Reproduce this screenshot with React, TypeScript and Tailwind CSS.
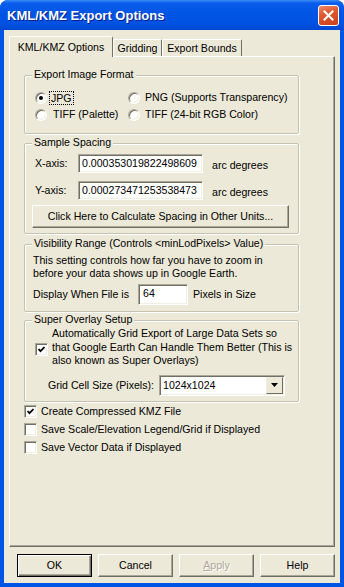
import React from 'react';

const sunken =
  'border border-t-[#ACA899] border-l-[#ACA899] border-r-white border-b-white shadow-[inset_1px_1px_0_#716F64,inset_-1px_-1px_0_#F1EFE2]';

function Radio({ checked }: { checked?: boolean }) {
  return (
    <span className={`relative flex-shrink-0 w-[12px] h-[12px] rounded-full bg-white flex items-center justify-center ${sunken}`}>
      {checked && <span className="w-[4px] h-[4px] rounded-full bg-black" />}
    </span>
  );
}

function Check({ checked }: { checked?: boolean }) {
  return (
    <span className={`flex-shrink-0 w-[13px] h-[13px] bg-white flex items-center justify-center ${sunken}`}>
      {checked && (
        <svg width="9" height="9" viewBox="0 0 9 9">
          <polyline points="1.5,4 3.5,6.2 7.5,2" fill="none" stroke="#000" strokeWidth="1.8" />
        </svg>
      )}
    </span>
  );
}

function Group({ title, className, children }: { title: string; className: string; children: React.ReactNode }) {
  return (
    <div className={`relative w-[275px] rounded-[2px] border border-[#C5C2B2] shadow-[inset_1px_1px_0_#fff,1px_1px_0_#fff] ${className}`}>
      {/* legend sits on the frame */}
      <span className="absolute -top-[8px] left-[7px] px-[2px] bg-[#ECE9D8] leading-[13px] whitespace-nowrap">{title}</span>
      {children}
    </div>
  );
}

function Button({ children, isDefault }: { children: React.ReactNode; isDefault?: boolean }) {
  return (
    <div
      className={`w-[75px] h-[23px] flex items-center justify-center bg-[#ECE9D8] border ${
        isDefault
          ? 'border-black shadow-[inset_1px_1px_0_#fff,inset_-1px_-1px_0_#716F64,inset_-2px_-2px_0_#ACA899]'
          : 'border-t-white border-l-white border-r-[#716F64] border-b-[#716F64] shadow-[inset_-1px_-1px_0_#ACA899]'
      }`}
    >
      {children}
    </div>
  );
}

export default function App() {
  return (
    <div className="w-[344px] h-[587px] flex flex-col bg-[#0055E5] rounded-t-[8px] overflow-hidden font-['Liberation_Sans',Arial,sans-serif] text-[10.6px] leading-[13px] text-black whitespace-nowrap">
      {/* Title bar */}
      <div className="h-[30px] flex items-center pl-[7px] pr-[5px] bg-[linear-gradient(180deg,#3C8EF8_0%,#0A5DEB_10%,#0055E5_45%,#0052E1_80%,#0046D2_100%)]">
        <span className="text-[13px] font-bold text-white [text-shadow:1px_1px_0_#0A1E8A]">KML/KMZ Export Options</span>
        <div className="ml-auto w-[21px] h-[21px] rounded-[3px] border border-white bg-[linear-gradient(160deg,#EC8A6C_0%,#E0592F_40%,#C83F1B_100%)] flex items-center justify-center">
          <svg width="11" height="11" viewBox="0 0 11 11">
            <path d="M1.5 1.5 L9.5 9.5 M9.5 1.5 L1.5 9.5" stroke="#fff" strokeWidth="2" strokeLinecap="square" />
          </svg>
        </div>
      </div>

      {/* Client area */}
      <div className="flex-1 mx-[4px] mb-[4px] bg-[#ECE9D8] flex flex-col pt-[6px] px-[5px]">
        {/* Tabs */}
        <div className="flex items-end h-[20px]">
          <div className="relative z-10 w-[104px] h-[21px] -mb-[1px] flex items-start justify-center pt-[4px] bg-[#ECE9D8] border-t border-l border-white border-r border-r-[#716F64] rounded-t-[2px]">
            KML/KMZ Options
          </div>
          <div className="w-[49px] h-[17px] flex items-center justify-center bg-[#ECE9D8] border-t border-l border-white border-r border-r-[#716F64] rounded-t-[2px]">
            Gridding
          </div>
          <div className="w-[80px] h-[17px] flex items-center justify-center bg-[#ECE9D8] border-t border-l border-white border-r border-r-[#716F64] rounded-t-[2px]">
            Export Bounds
          </div>
        </div>

        {/* Tab panel */}
        <div className="h-[491px] border border-t-white border-l-white border-r-[#716F64] border-b-[#716F64] shadow-[inset_-1px_-1px_0_#ACA899] pl-[14px] flex flex-col">
          <Group title="Export Image Format" className="mt-[18px] h-[59px] pt-[13px] pl-[10px]">
            <div className="grid grid-cols-[93px_1fr]">
              <div className="h-[17px] flex items-center gap-[3px]">
                <Radio checked />
                <span className="outline-1 outline-dotted outline-black px-[1px] leading-[12px]">JPG</span>
              </div>
              <div className="h-[17px] flex items-center gap-[5px]">
                <Radio />
                <span>PNG (Supports Transparency)</span>
              </div>
              <div className="h-[17px] flex items-center gap-[6px]">
                <Radio />
                <span>TIFF (Palette)</span>
              </div>
              <div className="h-[17px] flex items-center gap-[5px]">
                <Radio />
                <span>TIFF (24-bit RGB Color)</span>
              </div>
            </div>
          </Group>

          <Group title="Sample Spacing" className="mt-[9px] h-[91px] pt-[10px] pl-[7px]">
            <div className="flex items-center h-[19px] pl-[3px]">
              <span className="w-[43px]">X-axis:</span>
              <div className={`w-[125px] h-[19px] bg-white flex items-center pl-[3px] ${sunken}`}>0.000353019822498609</div>
              <span className="ml-[9px] pt-[4px]">arc degrees</span>
            </div>
            <div className="flex items-center h-[19px] pl-[3px] mt-[8px]">
              <span className="w-[43px]">Y-axis:</span>
              <div className={`w-[125px] h-[19px] bg-white flex items-center pl-[3px] ${sunken}`}>0.000273471253538473</div>
              <span className="ml-[9px] pt-[4px]">arc degrees</span>
            </div>
            <div className="mt-[5px] w-[257px] h-[23px] flex items-center justify-center border border-t-white border-l-white border-r-[#716F64] border-b-[#716F64] shadow-[inset_-1px_-1px_0_#ACA899]">
              Click Here to Calculate Spacing in Other Units...
            </div>
          </Group>

          <Group title="Visibility Range (Controls <minLodPixels> Value)" className="mt-[10px] h-[68px] pt-[9px] pl-[8px]">
            <p>This setting controls how far you have to zoom in</p>
            <p>before your data shows up in Google Earth.</p>
            <div className="mt-[4px] h-[21px] flex items-center">
              <span className="w-[105px]">Display When File is</span>
              <div className={`w-[50px] h-[21px] bg-white pl-[4px] pt-[2px] ${sunken}`}>64</div>
              <span className="ml-[5px]">Pixels in Size</span>
            </div>
          </Group>

          <Group title="Super Overlay Setup" className="mt-[8px] h-[82px] pt-[6px] pl-[10px]">
            <div className="flex items-center gap-[4px]">
              <span className="mt-[4px]">
                <Check checked />
              </span>
              <p className="leading-[13.5px]">
                Automatically Grid Export of Large Data Sets so
                <br />
                that Google Earth Can Handle Them Better (This is
                <br />
                also known as Super Overlays)
              </p>
            </div>
            <div className="mt-[7px] h-[21px] flex items-center pl-[13px]">
              <span className="w-[111px]">Grid Cell Size (Pixels):</span>
              <div className={`w-[126px] h-[21px] bg-white flex items-center pl-[3px] ${sunken}`}>
                <span className="flex-1">1024x1024</span>
                <div className="w-[17px] h-[17px] mr-[1px] flex items-center justify-center bg-[#ECE9D8] border border-t-[#F1EFE2] border-l-[#F1EFE2] border-r-[#716F64] border-b-[#716F64]">
                  <svg width="7" height="4" viewBox="0 0 7 4">
                    <path d="M0 0 H7 L3.5 4 Z" fill="#000" />
                  </svg>
                </div>
              </div>
            </div>
          </Group>

          <div className="flex flex-col">
            <div className="h-[18px] flex items-center gap-[4px]">
              <Check checked />
              <span>Create Compressed KMZ File</span>
            </div>
            <div className="h-[18px] flex items-center gap-[4px]">
              <Check />
              <span>Save Scale/Elevation Legend/Grid if Displayed</span>
            </div>
            <div className="h-[18px] flex items-center gap-[4px]">
              <Check />
              <span>Save Vector Data if Displayed</span>
            </div>
          </div>
        </div>

        {/* Dialog buttons */}
        <div className="mt-[7px] ml-[8px] flex gap-[6px]">
          <Button isDefault>OK</Button>
          <Button>Cancel</Button>
          <Button>
            <span className="text-[#ACA899] [text-shadow:1px_1px_0_#fff]">
              <span className="underline">A</span>pply
            </span>
          </Button>
          <Button>Help</Button>
        </div>
      </div>
    </div>
  );
}
